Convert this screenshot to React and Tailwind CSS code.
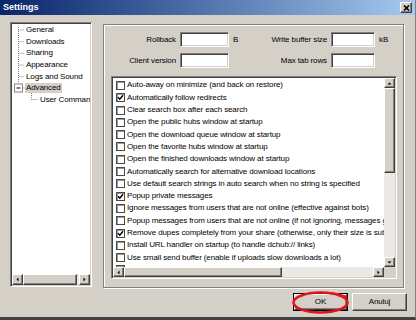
import React from "react";

const raised =
  "bg-[#d4d0c8] border border-t-white border-l-white border-r-[#404040] border-b-[#404040] shadow-[inset_-1px_-1px_0_#808080]";
const sunken =
  "border border-t-[#808080] border-l-[#808080] border-r-white border-b-white shadow-[inset_1px_1px_0_#404040,inset_-1px_-1px_0_#d4d0c8] p-px";

const treeItems = [
  { label: "General" },
  { label: "Downloads" },
  { label: "Sharing" },
  { label: "Appearance" },
  { label: "Logs and Sound" },
  { label: "Advanced", selected: true },
  { label: "User Commands", child: true },
];

const options = [
  ["Auto-away on minimize (and back on restore)", false],
  ["Automatically follow redirects", true],
  ["Clear search box after each search", false],
  ["Open the public hubs window at startup", false],
  ["Open the download queue window at startup", false],
  ["Open the favorite hubs window at startup", false],
  ["Open the finished downloads window at startup", false],
  ["Automatically search for alternative download locations", false],
  ["Use default search strings in auto search when no string is specified", false],
  ["Popup private messages", true],
  ["Ignore messages from users that are not online (effective against bots)", false],
  ["Popup messages from users that are not online (if not ignoring, messages go to main chat if enabled)", false],
  ["Remove dupes completely from your share (otherwise, only their size is subtracted)", true],
  ["Install URL handler on startup (to handle dchub:// links)", false],
  ["Use small send buffer (enable if uploads slow downloads a lot)", false],
  ["Add finished files to share instantly (if shared)", false],
];

const arrows = {
  up: "1.5,4.5 5.5,4.5 3.5,2.5",
  down: "1.5,2.5 5.5,2.5 3.5,4.5",
  left: "4.5,1.5 4.5,5.5 2.5,3.5",
  right: "2.5,1.5 2.5,5.5 4.5,3.5",
};

function ScrollBtn({ dir, className = "" }) {
  return (
    <div className={`${raised} flex items-center justify-center shrink-0 ${className}`}>
      <svg width="7" height="7" viewBox="0 0 7 7">
        <polygon points={arrows[dir]} fill="#000" />
      </svg>
    </div>
  );
}

function HScroll({ thumb, className = "" }) {
  return (
    <div className={`flex ${className}`}>
      <ScrollBtn dir="left" className="w-[11px] h-full" />
      <div className={`${raised} h-full shrink-0`} style={{ width: thumb }} />
      <div className="flex-1 bg-[#ebe9e5]" />
      <ScrollBtn dir="right" className="w-[11px] h-full" />
    </div>
  );
}

function TitleBar() {
  return (
    <div className="h-[15px] flex items-center justify-between pl-[3px] pr-[3px] bg-linear-to-r from-[#0a246a] to-[#a6caf0]">
      <span className="text-white font-bold text-[9px] tracking-normal">Settings</span>
      <div className={`${raised} w-[12px] h-[11px] flex items-center justify-center`}>
        <svg width="7" height="6" viewBox="0 0 7 6">
          <path d="M1 0.5 L6 5.5 M6 0.5 L1 5.5" stroke="#000" strokeWidth="1.6" />
        </svg>
      </div>
    </div>
  );
}

function Tree() {
  return (
    <div className={`${sunken} bg-white ml-[10px] mt-[7px] w-[82px] h-[265px] flex flex-col`}>
      <div className="relative flex-1 overflow-hidden">
        {/* dotted tree lines */}
        <svg className="absolute left-0 top-0" width="78" height="90">
          <g stroke="#808080" strokeWidth="1" strokeDasharray="1 1">
            <line x1="6.5" y1="3" x2="6.5" y2="59.5" />
            {[0, 1, 2, 3, 4].map((i) => (
              <line key={i} x1="6.5" y1={6 + i * 11.7} x2="12" y2={6 + i * 11.7} />
            ))}
            <line x1="10.5" y1="64" x2="13" y2="64" />
            <line x1="19.5" y1="69" x2="19.5" y2="75.5" />
            <line x1="19.5" y1="75.5" x2="26" y2="75.5" />
          </g>
          <rect x="2.5" y="60" width="8" height="8" fill="#fff" stroke="#808080" />
          <line x1="4.5" y1="64" x2="8.5" y2="64" stroke="#000" />
        </svg>
        {treeItems.map((it) => (
          <div
            key={it.label}
            className={`h-[11.7px] flex items-center whitespace-nowrap ${it.child ? "pl-[27px]" : "pl-[13px]"}`}
          >
            <span className={`px-px leading-[10px] ${it.selected ? "bg-[#d4d0c8]" : ""}`}>{it.label}</span>
          </div>
        ))}
      </div>
      <HScroll thumb={54} className="h-[11px]" />
    </div>
  );
}

function Field({ label, labelW, inputW, unit, unitW }) {
  return (
    <>
      <span className="text-right" style={{ width: labelW }}>
        {label}
      </span>
      <div className={`${sunken} bg-white h-[15px] ml-[4px]`} style={{ width: inputW }} />
      <span className="pl-[4px]" style={{ width: unitW }}>
        {unit}
      </span>
    </>
  );
}

function Checkbox({ checked }) {
  return (
    <div className="w-[9px] h-[9px] shrink-0 bg-white border border-[#4a4a4a] shadow-[inset_1px_1px_0_#9a9a9a] flex items-center justify-center">
      {checked && (
        <svg width="7" height="7" viewBox="0 0 7 7">
          <path d="M1 3.3 L2.8 5.2 L6 1.3" fill="none" stroke="#000" strokeWidth="1.5" />
        </svg>
      )}
    </div>
  );
}

function Options() {
  return (
    <div className="ml-[11px] mt-[9px] w-[301px] h-[264px] border border-[#808080] shadow-[1px_1px_0_#fff,inset_1px_1px_0_#fff]">
      <div className="flex items-center h-[15px] mt-[7px]">
        <Field label="Rollback" labelW={72} inputW={49} unit="B" unitW={16} />
        <Field label="Write buffer size" labelW={82} inputW={44} unit="kB" unitW={20} />
      </div>
      <div className="flex items-center h-[15px] mt-[6px]">
        <Field label="Client version" labelW={72} inputW={49} unit="" unitW={16} />
        <Field label="Max tab rows" labelW={82} inputW={44} unit="" unitW={20} />
      </div>
      <div className={`${sunken} bg-white mt-[8px] ml-[7px] w-[286px] h-[203px] flex flex-col`}>
        <div className="flex h-[189px]">
          <div className="flex-1 overflow-hidden pt-[1.3px]">
            {options.map(([text, checked]) => (
              <div key={text} className="h-[12.3px] flex items-center pl-[3px] whitespace-nowrap">
                <Checkbox checked={checked} />
                <span className="ml-[2px]">{text}</span>
              </div>
            ))}
          </div>
          <div className="w-[11px] flex flex-col">
            <ScrollBtn dir="up" className="h-[10px]" />
            <div className={`${raised} h-[85px]`} />
            <div className="flex-1 bg-[#ebe9e5]" />
            <ScrollBtn dir="down" className="h-[10px]" />
          </div>
        </div>
        <div className="flex h-[10px]">
          <HScroll thumb={158} className="flex-1" />
          <div className="w-[11px] bg-[#d4d0c8]" />
        </div>
      </div>
    </div>
  );
}

export default function App() {
  return (
    <div className="relative w-[416px] h-[320px] overflow-hidden bg-[#d4d0c8] border-b-[3px] border-b-[#404040] border-r border-r-[#808080] text-[8px] tracking-[-0.12px] text-black font-['Liberation_Sans',Arial,sans-serif]">
      <TitleBar />
      <div className="flex h-[273px]">
        <Tree />
        <Options />
      </div>
      <div className="flex justify-end gap-[4px] mt-[5px] pr-[8px]">
        <div className="relative">
          <div className="w-[55px] h-[18px] border border-black">
            <div className={`${raised} w-full h-full flex items-center justify-center`}>OK</div>
          </div>
          <svg className="absolute -left-[1px] -top-[2px]" width="58" height="23" viewBox="0 0 58 23">
            <ellipse cx="28.5" cy="11.5" rx="27" ry="10" fill="none" stroke="#e0141e" strokeWidth="2.6" />
            <path d="M38 2.2 Q50 2.5 55 7" fill="none" stroke="#e0141e" strokeWidth="2" />
          </svg>
        </div>
        <div className={`${raised} w-[55px] h-[18px] flex items-center justify-center`}>Anuluj</div>
      </div>
    </div>
  );
}
